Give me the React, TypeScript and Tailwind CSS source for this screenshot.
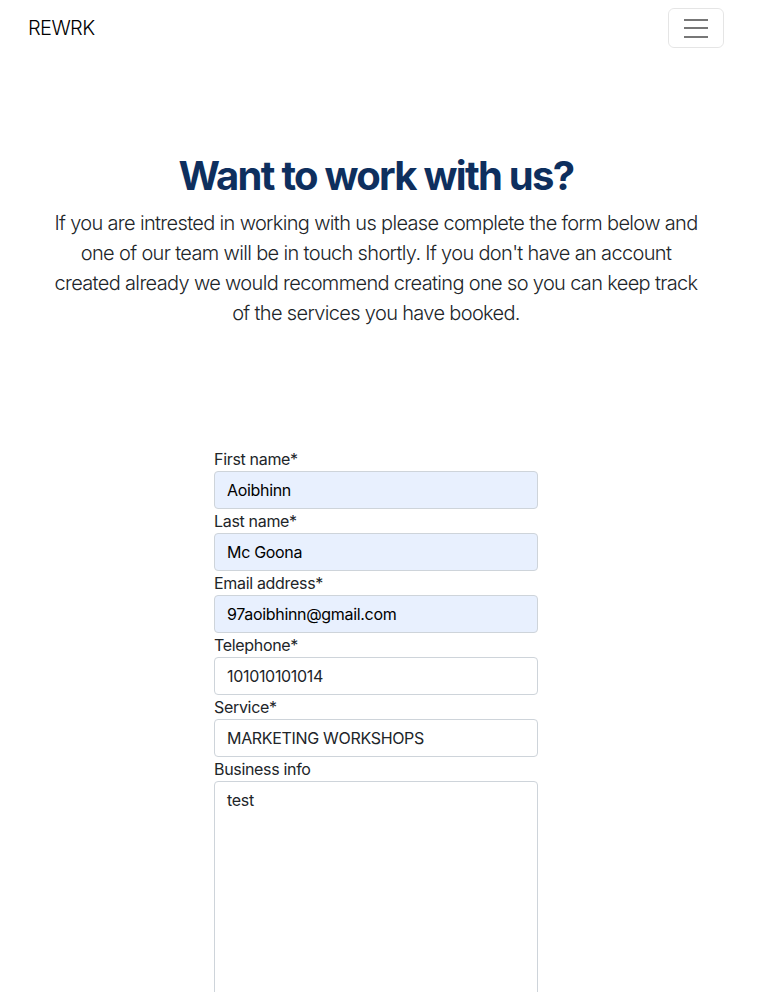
import React, { useState } from 'react';

const fields = [
  { label: 'First name*', value: 'Aoibhinn', autofill: true },
  { label: 'Last name*', value: 'Mc Goona', autofill: true },
  { label: 'Email address*', value: '97aoibhinn@gmail.com', autofill: true },
  { label: 'Telephone*', value: '101010101014', autofill: false },
  { label: 'Service*', value: 'MARKETING WORKSHOPS', autofill: false },
];

export default function App() {
  const [info, setInfo] = useState('test');

  return (
    <div className="min-h-screen bg-white text-[#212529]" style={{ fontFamily: 'Inter, "Noto Sans", sans-serif' }}>
      <nav className="flex items-center justify-between pl-[28px] pr-[36px] py-2">
        <span className="text-[20px] font-light tracking-[-0.03em] text-black">REWRK</span>
        <button className="flex h-10 w-14 flex-col items-center justify-center gap-[6.5px] rounded-md border border-black/10">
          <span className="block h-[2px] w-6 bg-[#777]" />
          <span className="block h-[2px] w-6 bg-[#777]" />
          <span className="block h-[2px] w-6 bg-[#777]" />
        </button>
      </nav>

      <section className="mt-[96px] pl-[51px] pr-[59px] text-center">
        <h1 className="mb-2 text-[40px] font-bold leading-[48px] tracking-[-0.043em] text-[#0e2f5e]">
          Want to work with us?
        </h1>
        <p className="text-[20px] font-light leading-[30px] tracking-[-0.033em] text-[#212529]">
          If you are intrested in working with us please complete the form below and one of our team will be in touch shortly. If you don't have an account created already we would recommend creating one so you can keep track of the services you have booked.
        </p>
      </section>

      <form className="mx-auto mt-[119px] w-[324px] -translate-x-[4px] pb-10 tracking-[-0.02em]">
        {fields.map(f => (
          <div key={f.label}>
            <label className="block text-[16px] leading-6 text-[#212529]">{f.label}</label>
            <input
              readOnly
              value={f.value}
              className={`block h-[38px] w-full rounded border border-[#ced4da] px-[12px] text-[16px] tracking-[-0.02em] outline-none ${f.autofill ? 'bg-[#e8f0fe] text-black' : 'bg-white text-[#212529]'}`}
            />
          </div>
        ))}
        <label className="block text-[16px] leading-6 text-[#212529]">Business info</label>
        <textarea
          value={info}
          onChange={e => setInfo(e.target.value)}
          className="block h-[260px] w-full resize-none rounded border border-[#ced4da] px-[12px] py-[6px] text-[16px] leading-6 tracking-[-0.02em] text-[#212529] outline-none"
        />
      </form>
    </div>
  );
}
